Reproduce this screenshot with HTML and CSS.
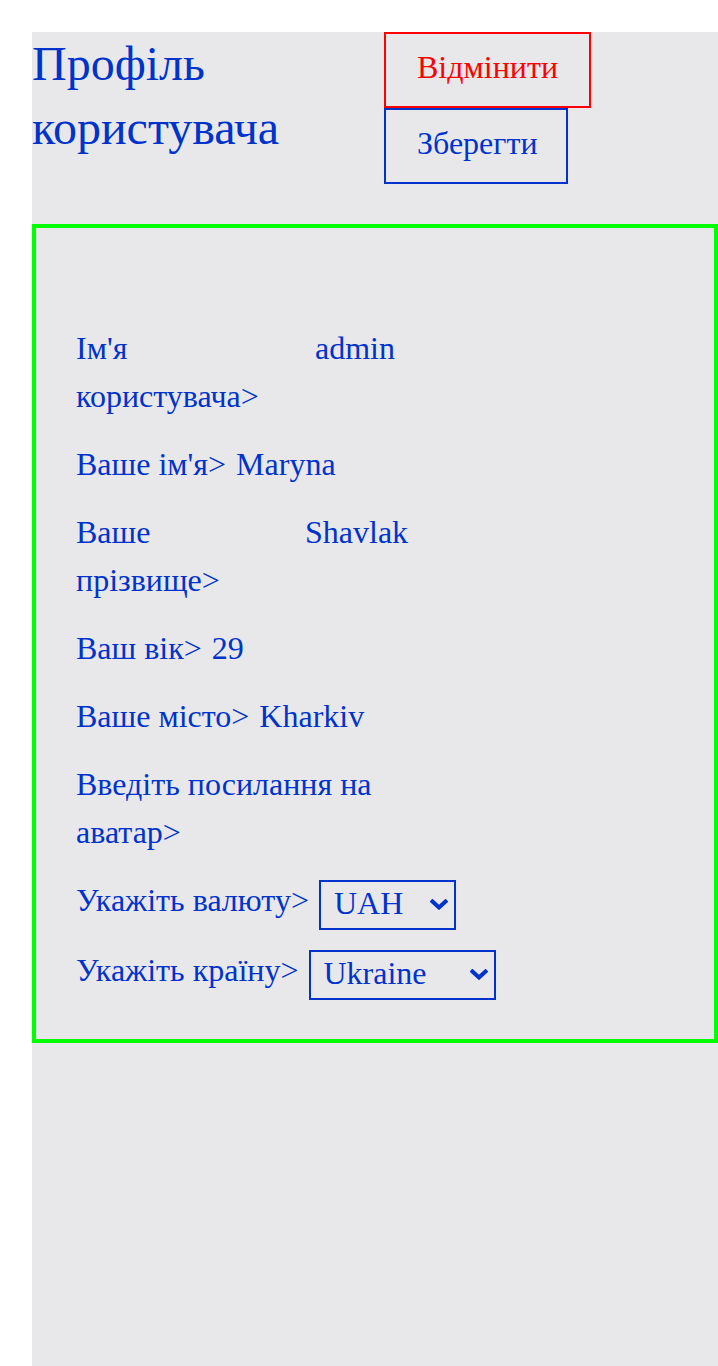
FILE: index.html
```html
<!DOCTYPE html>
<html lang="uk">
<head>
<meta charset="utf-8">
<title>Профіль користувача</title>
<link rel="stylesheet" href="styles.css">
</head>
<body>
<div class="page">
  <header class="header">
    <h1 class="title">Профіль користувача</h1>
    <div class="actions">
      <button class="btn btn-cancel">Відмінити</button>
      <button class="btn btn-save">Зберегти</button>
    </div>
  </header>
  <section class="card">
    <div class="row"><span class="label label-user">Ім'я користувача&gt;</span><span class="value">admin</span></div>
    <div class="row"><span class="label">Ваше ім'я&gt;</span><span class="value">Maryna</span></div>
    <div class="row"><span class="label label-surname">Ваше прізвище&gt;</span><span class="value">Shavlak</span></div>
    <div class="row"><span class="label">Ваш вік&gt;</span><span class="value">29</span></div>
    <div class="row"><span class="label">Ваше місто&gt;</span><span class="value">Kharkiv</span></div>
    <div class="row"><span class="label label-avatar">Введіть посилання на аватар&gt;</span></div>
    <div class="row row-select"><span class="label">Укажіть валюту&gt;</span>
      <span class="select-wrap">
        <select class="select select-currency"><option>UAH</option><option>USD</option><option>EUR</option></select>
        <svg class="chevron" width="18" height="11" viewBox="0 0 18 11" aria-hidden="true"><path d="M2.5 2.5 L9 8.5 L15.5 2.5" fill="none" stroke="#0033cc" stroke-width="4" stroke-linecap="square"/></svg>
      </span>
    </div>
    <div class="row row-select"><span class="label">Укажіть країну&gt;</span>
      <span class="select-wrap">
        <select class="select select-country"><option>Ukraine</option><option>Poland</option></select>
        <svg class="chevron" width="18" height="11" viewBox="0 0 18 11" aria-hidden="true"><path d="M2.5 2.5 L9 8.5 L15.5 2.5" fill="none" stroke="#0033cc" stroke-width="4" stroke-linecap="square"/></svg>
      </span>
    </div>
  </section>
</div>
</body>
</html>
```
FILE: styles.css
```css
html, body {
  margin: 0;
  padding: 0;
  background: #ffffff;
}
body {
  padding: 32px 0 0 32px;
  font-family: "Liberation Serif", "Times New Roman", serif;
  color: #0033cc;
}
.page {
  background: #e8e8eb;
  min-height: 1334px;
}
.header {
  display: flex;
  align-items: flex-start;
}
.title {
  width: 352px;
  margin: 0;
  font-size: 48px;
  line-height: 64px;
  font-weight: normal;
  color: #0033cc;
}
.actions {
  display: flex;
  flex-direction: column;
  align-items: flex-start;
}
.btn {
  font-family: "Liberation Serif", "Times New Roman", serif;
  font-size: 32px;
  line-height: 36px;
  padding: 15px 31px 21px 31px;
  background: transparent;
  margin: 0;
  cursor: pointer;
}
.btn-cancel {
  color: #ff0000;
  border: 2px solid #ff0000;
}
.btn-save {
  color: #0033cc;
  border: 2px solid #0033cc;
  padding-right: 28px;
}
.card {
  margin-top: 40px;
  border: 4px solid #00ff00;
  padding: 96px 40px 43px 40px;
}
.row {
  display: flex;
  align-items: baseline;
  gap: 10px;
  font-size: 32px;
  line-height: 48px;
  margin-bottom: 20px;
}
.row:last-child {
  margin-bottom: 0;
}
.row-select {
  align-items: flex-start;
}
.label-user {
  width: 229px;
}
.label-surname {
  width: 219px;
}
.label-avatar {
  width: 300px;
}
.select-wrap {
  position: relative;
  display: inline-flex;
  margin-top: 4px;
  margin-bottom: -4px;
}
.select {
  -webkit-appearance: none;
  appearance: none;
  box-sizing: border-box;
  font-family: "Liberation Serif", "Times New Roman", serif;
  font-size: 32px;
  color: #0033cc;
  background: transparent;
  border: 2px solid #0033cc;
  border-radius: 0;
  height: 50px;
  padding: 0 0 4px 13px;
  margin: 0;
  outline: none;
}
.select-currency {
  width: 137px;
}
.select-country {
  width: 187px;
}
.chevron {
  position: absolute;
  right: 8px;
  top: 19px;
  pointer-events: none;
}
```
